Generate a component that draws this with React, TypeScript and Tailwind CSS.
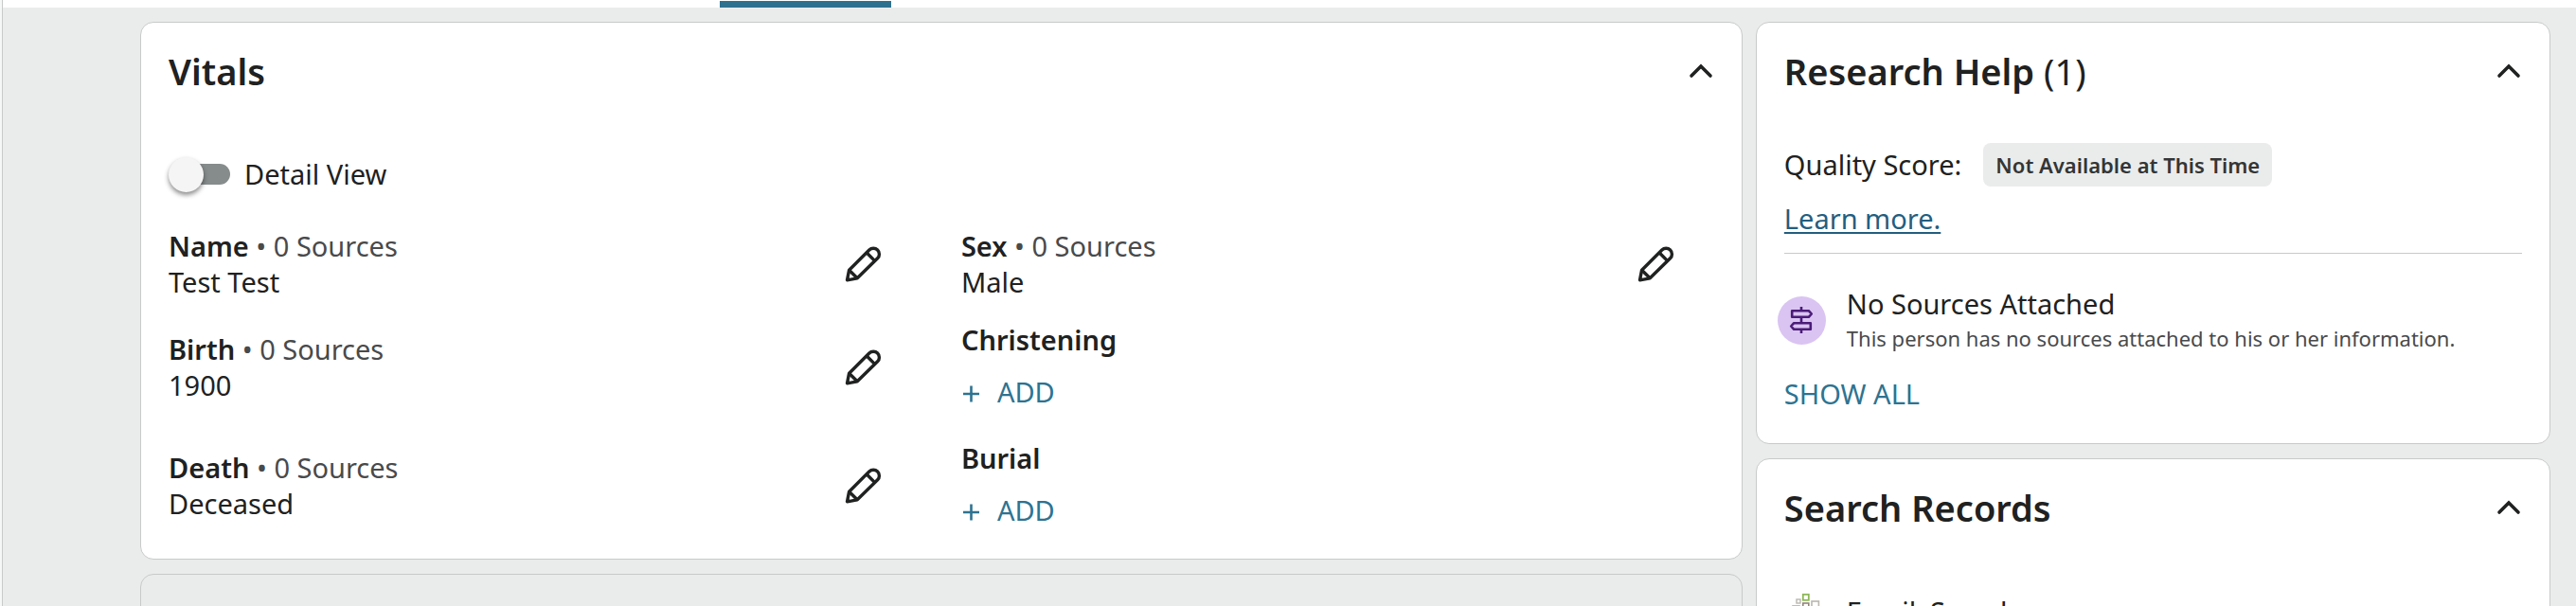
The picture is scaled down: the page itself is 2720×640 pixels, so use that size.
import { useState } from "react";
import type { ReactNode } from "react";

const ChevronUp = () => (
  <svg viewBox="0 0 40 40" className="size-10" fill="none" stroke="currentColor" strokeWidth="3.6" strokeLinecap="round" strokeLinejoin="miter">
    <path d="M10 25 20 15l10 10" />
  </svg>
);

const Pencil = () => (
  <svg viewBox="0 0 40 40" className="size-10" fill="none" stroke="currentColor" strokeWidth="3.4" strokeLinejoin="round">
    <path d="M3.5 36.8 5.6 26.2 26.8 5a6.2 6.2 0 0 1 8.8 8.8L14.2 34.8z" />
    <path d="M24 7.8l8.8 8.8M5.6 26.2l8.6 8.6" />
  </svg>
);

const Plus = () => (
  <svg viewBox="0 0 21 21" className="size-[21px]" fill="none" stroke="currentColor" strokeWidth="2.6">
    <path d="M2 12h17M10.5 3.5v17" />
  </svg>
);

const Signpost = () => (
  <svg viewBox="0 0 28 28" className="size-7" fill="none" stroke="currentColor" strokeWidth="2.6" strokeLinejoin="round">
    <path d="M14 0v4.2M14 10.8v6.4M14 23.8V28" />
    <path d="M4.2 4.2h17.6l3 3.3-3 3.3H4.2z" />
    <path d="M23.8 17.2H6.2l-3 3.3 3 3.3h17.6z" />
  </svg>
);

const TreeLogo = () => (
  <svg viewBox="0 0 32 40" className="w-8 h-10" fill="none" strokeWidth="1.6">
    <rect x="11.8" y="1.8" width="6" height="6" stroke="#8db757" strokeWidth="1.8" />
    <rect x="5" y="7" width="4" height="4" stroke="#bab7ae" strokeWidth="1.4" />
    <rect x="11.8" y="11" width="6" height="6" stroke="#8f8677" />
    <rect x="21" y="9" width="7.4" height="7.4" stroke="#bab7ae" />
    <rect x="1" y="14" width="7" height="7" stroke="#9dc36d" />
    <rect x="12" y="20" width="7" height="7" stroke="#8f8677" />
    <rect x="22" y="20" width="6" height="6" stroke="#8db757" />
    <path d="M15.6 28v12" stroke="#8f8677" strokeWidth="3" />
  </svg>
);

type CardProps = {
  title: string;
  count?: number;
  children: ReactNode;
};

const Card = ({ title, count, children }: CardProps) => {
  const [open, setOpen] = useState(true);

  return (
    <section className="rounded-[14px] border border-[#c8caca] bg-white">
      <div className="flex h-[102px] items-center justify-between pl-[29px] pr-[23px]">
        <h2 className="text-[38px] leading-[50px] font-semibold">
          {title}
          {count !== undefined && <span className="font-normal"> ({count})</span>}
        </h2>
        <button type="button" aria-label={`Toggle ${title}`} aria-expanded={open} onClick={() => setOpen(!open)}>
          <ChevronUp />
        </button>
      </div>
      {open && children}
    </section>
  );
};

type FactProps = {
  label: string;
  value?: string;
};

const Fact = ({ label, value }: FactProps) => {
  // facts without a value only offer the add button
  if (!value) {
    return (
      <div className="pt-[15px]">
        <h3 className="font-semibold">{label}</h3>
        <button type="button" className="flex h-[72px] items-center gap-[17px] text-[#2e7391]">
          <Plus />
          ADD
        </button>
      </div>
    );
  }

  return (
    <div className="flex items-center justify-between py-2 pr-[42px]">
      <div>
        <h3 className="font-semibold">
          {label} <span className="font-normal text-[#494a4b]">• 0 Sources</span>
        </h3>
        <p>{value}</p>
      </div>
      <button type="button" aria-label={`Edit ${label}`}>
        <Pencil />
      </button>
    </div>
  );
};

const facts: FactProps[] = [
  { label: "Name", value: "Test Test" },
  { label: "Sex", value: "Male" },
  { label: "Birth", value: "1900" },
  { label: "Christening" },
  { label: "Death", value: "Deceased" },
  { label: "Burial" },
];

const App = () => {
  const [detail, setDetail] = useState(false);

  return (
    <div className="h-screen overflow-hidden bg-[#f6f7f7] pl-[2px] font-['Noto_Sans',sans-serif] text-[29px] leading-[38px] text-[#202121]">
      <div className="min-h-screen border-l border-[#c8caca] bg-[#eaeceb]">
        <nav className="flex h-2 items-end bg-white pl-[757px]">
          <span className="h-[7px] w-[181px] bg-[#2e718f]" />
        </nav>

        <main className="grid grid-cols-[125fr_62fr] items-start gap-x-[14px] pt-[15px] pr-[27px] pl-[145px]">
          <div className="flex flex-col gap-[15px]">
            <Card title="Vitals">
              <div className="px-[29px] pb-[15px]">
                <label className="mt-[39px] mb-[30px] flex w-fit items-center gap-[15px]">
                  <span className="relative flex h-[38px] w-[65px] items-center">
                    <input
                      type="checkbox"
                      checked={detail}
                      onChange={() => setDetail(!detail)}
                      className="peer ml-[2px] h-[22px] w-full appearance-none rounded-full bg-[#868b8b]"
                    />
                    <span className="pointer-events-none absolute left-0 size-[37px] rounded-full bg-[#f5f5f5] shadow-[0_3px_5px_rgba(0,0,0,0.45)] peer-checked:left-7" />
                  </span>
                  Detail View
                </label>
                <div className="grid grid-cols-2 gap-x-[42px]">
                  {facts.map((fact) => (
                    <Fact key={fact.label} {...fact} />
                  ))}
                </div>
              </div>
            </Card>
            <section className="h-60 rounded-[14px] border border-[#c8caca]" />
          </div>

          <aside className="flex flex-col gap-[15px]">
            <Card title="Research Help" count={1}>
              <div className="px-[29px] pt-[25px] pb-[33px]">
                <div className="flex items-center gap-[23px]">
                  <p>Quality Score:</p>
                  <span className="rounded-lg bg-[#eaeceb] px-[13px] py-2 text-[22px] leading-[30px] font-semibold text-[#333536]">
                    Not Available at This Time
                  </span>
                </div>
                <a href="#learn" className="mt-[15px] block w-fit text-[#235e80] underline decoration-2 underline-offset-[3px]">
                  Learn more.
                </a>
                <hr className="mt-[17px] border-[#c8caca]" />
                <div className="mt-[34px] flex items-center gap-[22px]">
                  <span className="-ml-[7px] flex size-[51px] items-center justify-center rounded-full bg-[#dac4f2] text-[#4a1c78]">
                    <Signpost />
                  </span>
                  <div>
                    <p>No Sources Attached</p>
                    <p className="text-[22px] leading-[34px] text-[#494a4b]">
                      This person has no sources attached to his or her information.
                    </p>
                  </div>
                </div>
                <button type="button" className="mt-[23px] block text-[#2e7391]">
                  SHOW ALL
                </button>
              </div>
            </Card>
            <Card title="Search Records">
              <div className="flex items-center gap-[26px] px-[37px] pt-[39px] pb-8">
                <TreeLogo />
                <a href="#familysearch">FamilySearch</a>
              </div>
            </Card>
          </aside>
        </main>
      </div>
    </div>
  );
};

export default App;
